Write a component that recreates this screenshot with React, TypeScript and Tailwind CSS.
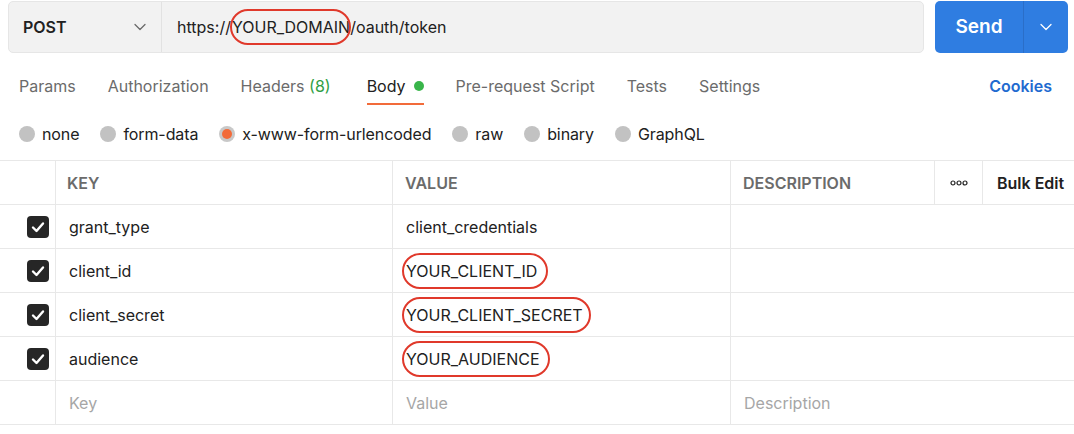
import React from "react";

const Chevron = ({ className }: { className?: string }) => (
  <svg className={className} width="12" height="8" viewBox="0 0 12 8" fill="none">
    <path d="M1 1.5 L6 6.5 L11 1.5" stroke="currentColor" strokeWidth="1.3" strokeLinecap="round" strokeLinejoin="round" />
  </svg>
);

const Check = () => (
  <div className="w-[22px] h-[22px] rounded-[4px] bg-[#262626] flex items-center justify-center">
    <svg width="14" height="12" viewBox="0 0 14 12" fill="none">
      <path d="M2 6.5 L5.5 10 L12 2.5" stroke="white" strokeWidth="2.4" strokeLinecap="round" strokeLinejoin="round" />
    </svg>
  </div>
);

const Oval = ({ children, right }: { children: React.ReactNode; right: string }) => (
  <span className="relative inline-block">
    {children}
    <span className={`absolute left-[-4px] top-[-6px] bottom-[-6px] border-2 border-[#e0392b] rounded-full ${right}`} />
  </span>
);

const Radio = ({ label, active }: { label: string; active?: boolean }) => (
  <div className="flex items-center gap-[7px]">
    {active ? (
      <div className="w-[16px] h-[16px] rounded-full bg-[#c8c8c8] flex items-center justify-center">
        <div className="w-[10px] h-[10px] rounded-full bg-[#f26b3a]" />
      </div>
    ) : (
      <div className="w-[16px] h-[16px] rounded-full bg-[#c2c2c2]" />
    )}
    <span className="text-[#212121]">{label}</span>
  </div>
);

const rows: { k: string; v: React.ReactNode }[] = [
  { k: "grant_type", v: "client_credentials" },
  { k: "client_id", v: <Oval right="right-[-11px]">YOUR_CLIENT_ID</Oval> },
  { k: "client_secret", v: <Oval right="right-[-8px]">YOUR_CLIENT_SECRET</Oval> },
  { k: "audience", v: <Oval right="right-[-10px]">YOUR_AUDIENCE</Oval> },
];

export default function App() {
  return (
    <div className="w-[1074px] h-[434px] bg-white overflow-hidden text-[16px] text-[#212121]" style={{ fontFamily: "Inter, 'Liberation Sans', sans-serif" }}>
      {/* top bar */}
      <div className="flex pl-[8px] pr-[6px] pt-[1px] gap-[11px]">
        <div className="flex-1 h-[52px] flex bg-[#f2f2f2] border border-[#e6e6e6] rounded-[5px]">
          <div className="w-[153px] flex items-center justify-between pl-[14px] pr-[15px] border-r border-[#e2e2e2]">
            <span className="font-semibold text-[16px] text-[#212121]">POST</span>
            <Chevron className="text-[#6b6b6b]" />
          </div>
          <div className="flex items-center pl-[15px] text-[16px] text-[#212121]">
            <span>https://</span>
            <span className="relative inline-block ml-[1px]">
              YOUR_DOMAIN
              <span className="absolute left-[-2px] right-[-1px] top-[-6px] bottom-[-6px] border-2 border-[#e0392b] rounded-full" />
            </span>
            <span>/oauth/token</span>
          </div>
        </div>
        <div className="w-[133px] h-[52px] flex bg-[#2f7de1] rounded-[5px] text-white">
          <div className="w-[89px] flex items-center justify-center font-semibold text-[19px] border-r border-[#2a6ec8]">Send</div>
          <div className="flex-1 flex items-center justify-center">
            <Chevron className="text-white" />
          </div>
        </div>
      </div>

      {/* tabs */}
      <div className="flex items-start justify-between pl-[19px] pr-[22px] mt-[21px] h-[31px] text-[16px]">
        <div className="flex gap-[32px] text-[#6b6b6b]">
          <span>Params</span>
          <span>Authorization</span>
          <span>Headers <span className="text-[#2f9e44]">(8)</span></span>
          <span className="relative ml-[4px] text-[#212121] flex items-center gap-[8px]">
            Body
            <span className="w-[10px] h-[10px] rounded-full bg-[#39b54a]" />
            <span className="absolute left-0 right-0 top-[29px] h-[2px] bg-[#f26b3a]" />
          </span>
          <span>Pre-request Script</span>
          <span>Tests</span>
          <span>Settings</span>
        </div>
        <span className="font-semibold text-[#1f6bd0]">Cookies</span>
      </div>

      {/* radios */}
      <div className="flex gap-[21px] pl-[19px] mt-[17px] h-[34px] items-start text-[16px] tracking-[-0.1px]">
        <Radio label="none" />
        <Radio label="form-data" />
        <Radio label="x-www-form-urlencoded" active />
        <Radio label="raw" />
        <Radio label="binary" />
        <Radio label="GraphQL" />
      </div>

      {/* table */}
      <div className="mt-[4px] border-t border-[#e8e8e8] text-[16px]">
        <div className="flex h-[44px] border-b border-[#e8e8e8] font-semibold text-[#6b6b6b] text-[16px]">
          <div className="w-[56px] border-r border-[#e8e8e8]" />
          <div className="w-[337px] border-r border-[#e8e8e8] flex items-center pl-[11px]">KEY</div>
          <div className="w-[338px] border-r border-[#e8e8e8] flex items-center pl-[12px]">VALUE</div>
          <div className="w-[204px] border-r border-[#e8e8e8] flex items-center pl-[12px]">DESCRIPTION</div>
          <div className="w-[48px] border-r border-[#e8e8e8] flex items-center justify-center text-[#212121]">
            <svg width="18" height="6" viewBox="0 0 18 6" fill="none">
              <circle cx="3" cy="3" r="2" stroke="#212121" strokeWidth="1.2" />
              <circle cx="9" cy="3" r="2" stroke="#212121" strokeWidth="1.2" />
              <circle cx="15" cy="3" r="2" stroke="#212121" strokeWidth="1.2" />
            </svg>
          </div>
          <div className="flex-1 flex items-center pl-[14px] text-[#212121]">Bulk Edit</div>
        </div>
        {rows.map((r) => (
          <div key={r.k} className="flex h-[44px] border-b border-[#e8e8e8]">
            <div className="w-[56px] border-r border-[#e8e8e8] flex items-center justify-end pr-[6px]">
              <Check />
            </div>
            <div className="w-[337px] border-r border-[#e8e8e8] flex items-center pl-[13px]">{r.k}</div>
            <div className="w-[338px] border-r border-[#e8e8e8] flex items-center pl-[13px]">{r.v}</div>
            <div className="flex-1" />
          </div>
        ))}
        <div className="flex h-[44px] border-b border-[#e8e8e8] text-[#a6a6a6]">
          <div className="w-[56px] border-r border-[#e8e8e8]" />
          <div className="w-[337px] border-r border-[#e8e8e8] flex items-center pl-[13px]">Key</div>
          <div className="w-[338px] border-r border-[#e8e8e8] flex items-center pl-[13px]">Value</div>
          <div className="flex-1 flex items-center pl-[13px]">Description</div>
        </div>
      </div>
    </div>
  );
}
